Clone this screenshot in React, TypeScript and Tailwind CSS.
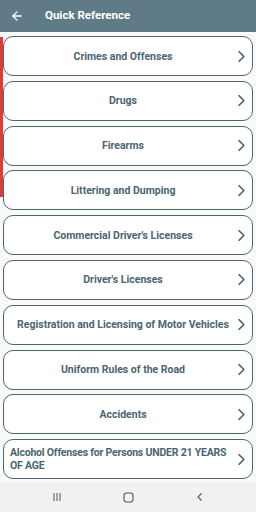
import { ArrowLeft, ChevronRight } from 'lucide-react';

const items = [
  'Crimes and Offenses',
  'Drugs',
  'Firearms',
  'Littering and Dumping',
  "Commercial Driver's Licenses",
  "Driver's Licenses",
  'Registration and Licensing of Motor Vehicles',
  'Uniform Rules of the Road',
  'Accidents',
  'Alcohol Offenses for Persons UNDER 21 YEARS OF AGE',
];

export default function App() {
  return (
    <div className="w-[256px] h-[512px] flex flex-col bg-[#fafafa] overflow-hidden" style={{ fontFamily: 'Roboto, "Liberation Sans", sans-serif' }}>
      {/* header */}
      <div className="h-[32px] bg-[#5f7b88] flex items-center shrink-0">
        <ArrowLeft size={14} strokeWidth={2.2} className="text-white ml-[10px]" />
        <span className="ml-[21px] text-white font-bold text-[11.5px]">Quick Reference</span>
      </div>

      {/* list */}
      <div className="relative flex-1 flex flex-col gap-[4.8px] pt-[4px] pl-[3px] pr-[3px]">
        <div className="absolute left-0 top-[5px] w-[3px] h-[160px] bg-[#e53935]" />
        {items.map((item, i) => {
          const long = i === items.length - 1;
          return (
            <div
              key={item}
              className="h-[40px] shrink-0 flex items-center bg-white border border-[#4a6674] rounded-[10px] pl-[6px] pr-[1px]"
            >
              <span
                className={`flex-1 text-[10.5px] font-bold leading-[13px] text-[#4a6572] ${long ? 'text-left tracking-[-0.2px]' : 'text-center'}`}
              >
                {item}
              </span>
              <ChevronRight size={19} strokeWidth={2.2} className="text-[#4a6572] shrink-0 -ml-[4px]" />
            </div>
          );
        })}
      </div>

      {/* nav bar */}
      <div className="h-[30px] bg-[#f1f1f1] flex items-center justify-center gap-[61px] shrink-0">
        <svg width="10" height="10" viewBox="0 0 10 10">
          <rect x="1.5" y="1" width="1" height="8" fill="#555" />
          <rect x="4.5" y="1" width="1" height="8" fill="#555" />
          <rect x="7.5" y="1" width="1" height="8" fill="#555" />
        </svg>
        <svg width="11" height="11" viewBox="0 0 11 11">
          <rect x="1" y="1" width="9" height="9" rx="2.5" fill="none" stroke="#555" strokeWidth="1.1" />
        </svg>
        <svg width="10" height="10" viewBox="0 0 10 10">
          <path d="M6.5 1.5 L3 5 L6.5 8.5" fill="none" stroke="#555" strokeWidth="1.1" />
        </svg>
      </div>
    </div>
  );
}
